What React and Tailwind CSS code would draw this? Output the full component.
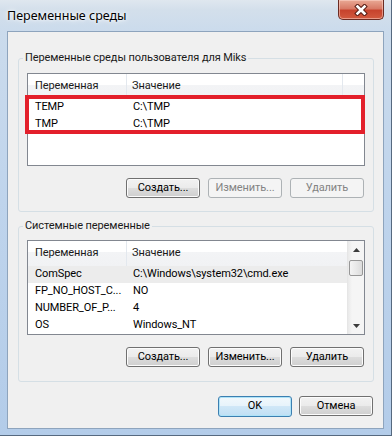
const font = "font-['Roboto',sans-serif]";

function Btn({ children, disabled, def, className = "" }) {
  if (disabled) {
    return (
      <div className={"w-[74px] h-[20px] flex items-center justify-center rounded-[3px] border border-[#adb2b5] bg-[#f4f4f4] text-[#838383] " + className}>
        {children}
      </div>
    );
  }
  if (def) {
    return (
      <div className={"w-[74px] h-[21px] flex items-center justify-center rounded-[3px] border border-[#3c7fb1] bg-[linear-gradient(180deg,#f2f8fc_0%,#e7f3fb_48%,#d0e7f7_50%,#bfdff4_100%)] shadow-[inset_0_0_0_1px_#aee3f8] text-black " + className}>
        {children}
      </div>
    );
  }
  return (
    <div className={"w-[74px] h-[20px] flex items-center justify-center rounded-[3px] border border-[#707070] bg-[linear-gradient(180deg,#f2f2f2_0%,#ebebeb_48%,#dddddd_50%,#cfcfcf_100%)] shadow-[inset_0_0_0_1px_#fcfcfc] text-black " + className}>
      {children}
    </div>
  );
}

function Header({ filler }) {
  return (
    <div className="h-[25px] flex bg-[linear-gradient(180deg,#ffffff_0%,#ffffff_42%,#f3f4f6_44%,#f1f2f4_100%)] text-[#1a1a1a] shrink-0">
      <div className="w-[99px] pl-[7px] flex items-center border-r border-[#e3e8ee]">Переменная</div>
      <div className={(filler ? "w-[216px] border-r border-[#e3e8ee] " : "flex-1 ") + "pl-[5px] flex items-center"}>Значение</div>
      {filler && <div className="flex-1" />}
    </div>
  );
}

function Row({ a, b, hl }) {
  return (
    <div className={"h-[17px] flex items-center " + (hl ? "bg-[#ececec]" : "")}>
      <div className="w-[100px] pl-[7px] whitespace-nowrap">{a}</div>
      <div className="pl-[5px] whitespace-nowrap">{b}</div>
    </div>
  );
}

function GroupBox({ label, children, className = "" }) {
  return (
    <div className={"relative ml-[10px] w-[356px] border border-[#d5dfe5] rounded-[3px] px-[8px] " + className}>
      <div className="absolute left-[4px] -top-[9px] px-[2px] bg-[#f0f0f0] text-[#1a1a1a] leading-[16px]">{label}</div>
      {children}
    </div>
  );
}

function CloseX() {
  return (
    <svg width="14" height="12" viewBox="0 0 14 12">
      <path d="M3.5 2.5 L10.5 9.5 M10.5 2.5 L3.5 9.5" stroke="#5a1f16" strokeWidth="4.6" strokeLinecap="square" fill="none" />
      <path d="M3.5 2.5 L10.5 9.5 M10.5 2.5 L3.5 9.5" stroke="#ffffff" strokeWidth="2.6" strokeLinecap="square" fill="none" />
    </svg>
  );
}

export default function App() {
  return (
    <div className={"w-[392px] h-[436px] overflow-hidden flex flex-col text-[11px] tracking-[-0.1px] text-black border-r border-b border-[#56697f] bg-[linear-gradient(180deg,#dfe7ef_0px,#d3dfeb_10px,#cbdbec_31px,#bfd4ec_200px,#b3cce9_100%)] " + font}>
      <div className="h-[31px] flex items-start justify-between shrink-0">
        <div className="pl-[7px] pt-[7px] text-[12.5px] tracking-normal leading-[17px] font-['Noto_Sans',sans-serif] [text-shadow:0_0_6px_#ffffff,0_0_3px_#ffffff]">Переменные среды</div>
        <div className="mr-[7px] w-[46px] h-[20px] rounded-b-[5px] border border-t-0 border-[#6b2b22] bg-[linear-gradient(180deg,#e9a995_0%,#d87a66_45%,#c7432d_55%,#d25a3f_100%)] shadow-[inset_0_0_0_1px_rgba(255,220,210,0.5)] flex items-center justify-center">
          <CloseX />
        </div>
      </div>
      <div className="ml-[7px] w-[377px] h-[398px] border border-[#8ea4bd] bg-[#f0f0f0] flex flex-col shrink-0">
        <GroupBox label="Переменные среды пользователя для Miks" className="mt-[26px] pt-[14px] pb-[13px]">
          <div className="relative h-[93px] border border-[#828790] bg-white flex flex-col">
            <Header filler />
            <Row a="TEMP" b="C:\TMP" />
            <Row a="TMP" b="C:\TMP" />
            <div className="absolute -left-[3px] top-[21px] w-[340px] h-[39px] border-[4px] border-[#e3202b]" />
          </div>
          <div className="mt-[12px] flex justify-end gap-[8px] pr-[1px]">
            <Btn>Создать...</Btn>
            <Btn disabled>Изменить...</Btn>
            <Btn disabled>Удалить</Btn>
          </div>
        </GroupBox>
        <GroupBox label="Системные переменные" className="mt-[14px] pt-[13px] pb-[14px]">
          <div className="h-[95px] border border-[#828790] bg-white flex">
            <div className="flex-1 flex flex-col overflow-hidden">
              <Header />
              <Row a="ComSpec" b="C:\Windows\system32\cmd.exe" hl />
              <Row a="FP_NO_HOST_C..." b="NO" />
              <Row a="NUMBER_OF_P..." b="4" />
              <Row a="OS" b="Windows_NT" />
            </div>
            <div className="w-[17px] flex flex-col bg-[linear-gradient(90deg,#e9e9e9_0%,#f5f5f5_25%,#f5f5f5_100%)] border-l border-[#e6e6e6]">
              <div className="h-[17px] flex items-center justify-center">
                <svg width="7" height="4" viewBox="0 0 7 4"><path d="M0 4 L3.5 0 L7 4 Z" fill="#3c3c3c" /></svg>
              </div>
              <div className="mx-[1px] mt-[2px] h-[16px] rounded-[2px] border border-[#979797] bg-[linear-gradient(90deg,#f4f4f4_0%,#e9e9e9_50%,#dcdcdc_100%)]" />
              <div className="flex-1" />
              <div className="h-[17px] flex items-center justify-center">
                <svg width="7" height="4" viewBox="0 0 7 4"><path d="M0 0 L7 0 L3.5 4 Z" fill="#3c3c3c" /></svg>
              </div>
            </div>
          </div>
          <div className="mt-[12px] flex justify-end gap-[8px] pr-[1px]">
            <Btn>Создать...</Btn>
            <Btn>Изменить...</Btn>
            <Btn>Удалить</Btn>
          </div>
        </GroupBox>
        <div className="mt-[14px] flex justify-end gap-[7px] pr-[10px]">
          <Btn def>OK</Btn>
          <Btn>Отмена</Btn>
        </div>
      </div>
    </div>
  );
}
